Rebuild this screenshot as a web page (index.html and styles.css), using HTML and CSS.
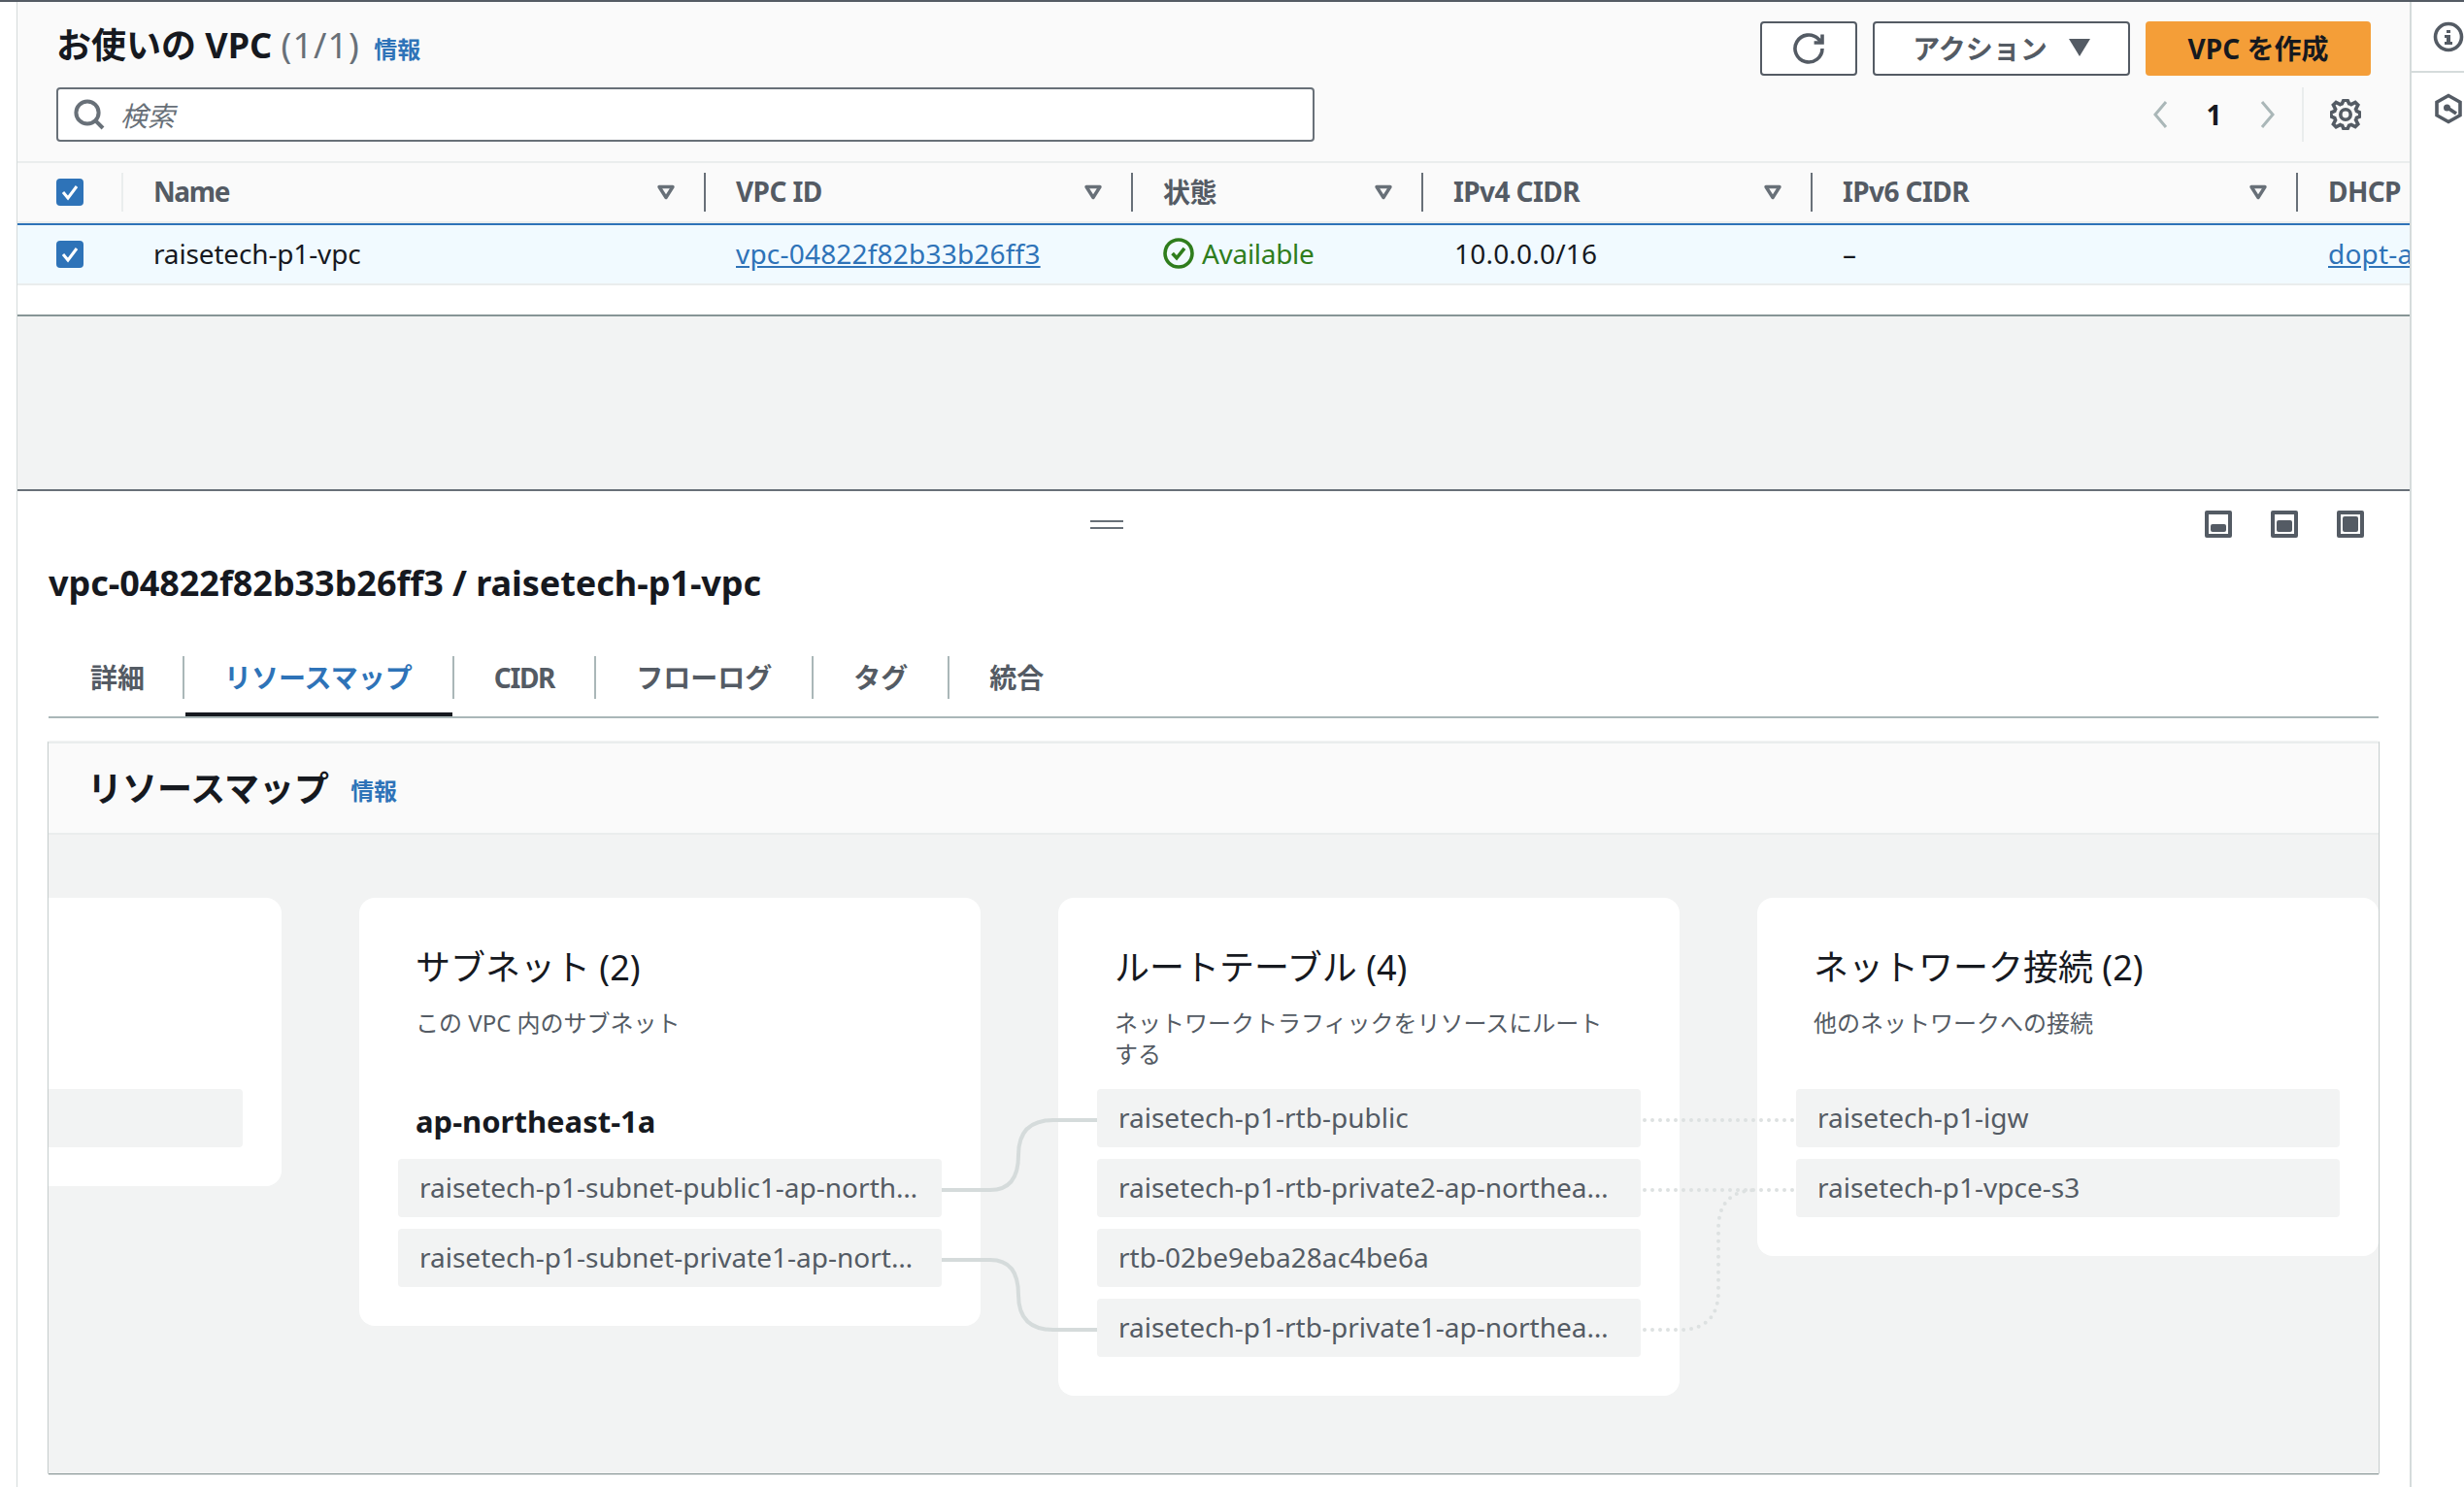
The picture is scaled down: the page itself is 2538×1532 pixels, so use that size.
FILE: index.html
```html
<!DOCTYPE html>
<html lang="ja">
<head>
    <meta charset="UTF-8">
    <title>VPC</title>
    <link rel="stylesheet" href="styles.css">
</head>
<body>
    <div class="page">
        <main class="main">
            <div class="toolbar">
                <div class="title-row">
                    <h2 class="title">お使いの VPC <span class="count">(1/1)</span> <a class="info">情報</a></h2>
                    <div class="actions">
                        <button class="btn btn-icon">
                            <svg class="icon-refresh" viewBox="0 0 16 16"><path d="M15 8a7 7 0 1 1-2.05-4.95L15 5"/><path d="M15 .8V5h-4.2"/></svg>
                        </button>
                        <button class="btn btn-menu"><span>アクション</span>
                            <svg class="icon-caret" viewBox="0 0 22 18"><path d="M0 0h22L11 18z"/></svg>
                        </button>
                        <button class="btn btn-primary"><span>VPC を作成</span></button>
                    </div>
                </div>
                <div class="search-row">
                    <div class="search">
                        <svg class="icon-search" viewBox="0 0 16 16"><circle cx="7" cy="7" r="5.8"/><path d="M11.2 11.2 15 15"/></svg>
                        <span class="placeholder">検索</span>
                    </div>
                    <div class="pager">
                        <svg class="chevron" viewBox="0 0 16 30"><path d="M14 2 3 15l11 13"/></svg>
                        <span class="page-num">1</span>
                        <svg class="chevron" viewBox="0 0 16 30"><path d="m2 2 11 13L2 28"/></svg>
                        <div class="pager-settings">
                            <svg class="icon-gear" viewBox="0 0 16 16"><path d="m13.3 5.2 1.1-2.1L13 1.7l-2.1 1.1c-.3-.2-.7-.3-1.1-.4L9 .6H7l-.8 1.8c-.3.1-.7.2-1 .4L3.1 1.7 1.7 3.1l1.1 2.1c-.2.3-.3.7-.4 1L.6 7v2l1.8.8c.1.4.3.7.4 1.1l-1.1 2.1 1.4 1.4 2.1-1.1c.3.2.7.3 1.1.4L7 15.4h2l.8-1.8c.4-.1.7-.3 1.1-.4l2.1 1.1 1.4-1.4-1.1-2.1c.2-.3.3-.7.4-1.1l1.7-.7V7l-1.7-.8c-.1-.3-.2-.7-.4-1z"/><circle cx="8" cy="8" r="2.6"/></svg>
                        </div>
                    </div>
                </div>
            </div>

            <div class="table">
                <div class="tr thead">
                    <div class="cell cell-check"><span class="checkbox"><svg viewBox="0 0 28 28"><path d="m7 14 5 6 9-12"/></svg></span></div>
                    <div class="cell first-sep">Name<svg class="sort" viewBox="0 0 20 16"><path d="M3 2.5h14L10 13.5z"/></svg></div>
                    <div class="cell">VPC ID<svg class="sort" viewBox="0 0 20 16"><path d="M3 2.5h14L10 13.5z"/></svg></div>
                    <div class="cell">状態<svg class="sort" viewBox="0 0 20 16"><path d="M3 2.5h14L10 13.5z"/></svg></div>
                    <div class="cell">IPv4 CIDR<svg class="sort" viewBox="0 0 20 16"><path d="M3 2.5h14L10 13.5z"/></svg></div>
                    <div class="cell">IPv6 CIDR<svg class="sort" viewBox="0 0 20 16"><path d="M3 2.5h14L10 13.5z"/></svg></div>
                    <div class="cell">DHCP</div>
                </div>
                <div class="tr row-selected">
                    <div class="cell cell-check"><span class="checkbox"><svg viewBox="0 0 28 28"><path d="m7 14 5 6 9-12"/></svg></span></div>
                    <div class="cell name-cell">raisetech-p1-vpc</div>
                    <div class="cell"><a class="link">vpc-04822f82b33b26ff3</a></div>
                    <div class="cell status"><svg class="icon-ok" viewBox="0 0 16 16"><circle cx="8" cy="8" r="7"/><path d="m4.8 8 2.2 2.4 4-5"/></svg>Available</div>
                    <div class="cell num-cell">10.0.0.0/16</div>
                    <div class="cell">–</div>
                    <div class="cell"><a class="link">dopt-a</a></div>
                </div>
            </div>
            <div class="table-foot"></div>
            <div class="split-gap"></div>

            <section class="pane">
                <div class="pane-tools">
                    <div class="handle"></div>
                    <div class="pane-icons">
                        <span class="size-icon"><i class="fill-s"></i></span>
                        <span class="size-icon"><i class="fill-m"></i></span>
                        <span class="size-icon"><i class="fill-l"></i></span>
                    </div>
                </div>
                <h2 class="pane-title">vpc-04822f82b33b26ff3 / raisetech-p1-vpc</h2>
                <div class="tabs">
                    <div class="tab"><span class="tab-label">詳細</span></div>
                    <div class="tab active"><span class="tab-label">リソースマップ</span></div>
                    <div class="tab tab-latin"><span class="tab-label">CIDR</span></div>
                    <div class="tab"><span class="tab-label">フローログ</span></div>
                    <div class="tab"><span class="tab-label">タグ</span></div>
                    <div class="tab"><span class="tab-label">統合</span></div>
                </div>

                <div class="map">
                    <div class="map-head">
                        <h3>リソースマップ</h3><a class="info">情報</a>
                    </div>
                    <div class="map-body">
                        <div class="res-card res-cut">
                            <div class="res-head"></div>
                            <div class="res-item"></div>
                        </div>
                        <div class="res-card">
                            <div class="res-head">
                                <h4>サブネット (2)</h4>
                                <p>この VPC 内のサブネット</p>
                            </div>
                            <div class="az">ap-northeast-1a</div>
                            <div class="res-item">raisetech-p1-subnet-public1-ap-northeast-1a</div>
                            <div class="res-item">raisetech-p1-subnet-private1-ap-northeast-1a</div>
                        </div>
                        <div class="res-card">
                            <div class="res-head">
                                <h4>ルートテーブル (4)</h4>
                                <p>ネットワークトラフィックをリソースにルートする</p>
                            </div>
                            <div class="res-item">raisetech-p1-rtb-public</div>
                            <div class="res-item">raisetech-p1-rtb-private2-ap-northeast-1a</div>
                            <div class="res-item">rtb-02be9eba28ac4be6a</div>
                            <div class="res-item">raisetech-p1-rtb-private1-ap-northeast-1a</div>
                        </div>
                        <div class="res-card">
                            <div class="res-head">
                                <h4>ネットワーク接続 (2)</h4>
                                <p>他のネットワークへの接続</p>
                            </div>
                            <div class="res-item">raisetech-p1-igw</div>
                            <div class="res-item">raisetech-p1-vpce-s3</div>
                        </div>
                        <!-- lines between the items, coordinates relative to map-body -->
                        <svg class="links" viewBox="0 0 2400 658">
                            <path class="solid" d="M920 366H970Q999 366 999 330Q999 294 1035 294H1080"/>
                            <path class="solid" d="M920 438H970Q999 438 999 474Q999 510 1035 510H1080"/>
                            <path class="dotted" d="M1644 294H1798"/>
                            <path class="dotted" d="M1644 366H1798"/>
                            <path class="dotted" d="M1644 510H1680Q1720 510 1720 470V406Q1720 366 1760 366"/>
                        </svg>
                    </div>
                </div>
            </section>
        </main>
        <aside class="side">
            <div class="side-top">
                <svg class="side-icon" viewBox="0 0 32 32"><circle cx="16" cy="16" r="13.5"/><path class="solid-i" d="M14 9h4v3h-4zM12 14h6v7h2v3h-8v-3h2v-4h-2z"/></svg>
            </div>
            <div class="side-next">
                <svg class="side-icon" viewBox="0 0 32 32"><path d="M16 2.5 28 9.2v13.6l-12 6.7-12-6.7V9.2z"/><circle class="solid-i" cx="14.5" cy="15" r="3.5"/><path d="m15 15 9 6"/></svg>
            </div>
        </aside>
    </div>
</body>
</html>
```
FILE: styles.css
```css
* {
    box-sizing: border-box;
}
html, body {
    margin: 0;
    height: 100%;
}
body {
    font-family: "Noto Sans", "Noto Sans CJK JP", sans-serif;
    font-size: 28px;
    color: #16191f;
    background: #fff;
    overflow: hidden;
}
h2, h3, h4, p {
    margin: 0;
}
svg {
    display: block;
    fill: none;
}
.page {
    display: flex;
    height: 1532px;
    border-top: 2px solid #545b64;
}
.main {
    width: 2465px;
    margin-left: 17px;
    border-left: 1px solid #d5dbdb;
    overflow: hidden;
}
.side {
    flex: 1;
    border-left: 2px solid #d5dbdb;
}
.side-top {
    height: 73px;
    padding: 20px 0 0 22px;
    border-bottom: 2px solid #d5dbdb;
}
.side-next {
    padding: 21px 0 0 22px;
}
.side-icon {
    width: 32px;
    height: 32px;
    stroke: #545b64;
    stroke-width: 3.6;
}
.solid-i {
    fill: #545b64;
    stroke: none;
}

/* top of the page */
.toolbar {
    height: 164px;
    padding: 20px 40px 0;
    background: #fafafa;
}
.title-row {
    display: flex;
    justify-content: space-between;
    height: 56px;
    margin-bottom: 12px;
}
.title {
    font-size: 36px;
    font-weight: 700;
    line-height: 50px;
}
.count {
    font-weight: 400;
    color: #687078;
    letter-spacing: 1px;
}
.info {
    margin-left: 5px;
    font-size: 24px;
    font-weight: 700;
    color: #2e73b8;
}
.actions {
    display: flex;
    gap: 16px;
}
.btn {
    height: 56px;
    border: 2px solid #545b64;
    border-radius: 4px;
    background: #fff;
    font-family: inherit;
    font-size: 28px;
    font-weight: 700;
    color: #545b64;
    display: flex;
    align-items: center;
    justify-content: center;
}
.btn span {
    margin-top: -3px;
}
.btn-icon {
    width: 100px;
}
.icon-refresh {
    width: 32px;
    height: 32px;
    stroke: #545b64;
    stroke-width: 1.8;
}
.btn-menu {
    width: 265px;
    gap: 22px;
}
.icon-caret {
    width: 22px;
    height: 18px;
    margin-top: -3px;
    fill: #545b64;
}
.btn-primary {
    width: 232px;
    border: none;
    background: #f49e38;
    color: #16191f;
}
.search-row {
    display: flex;
    align-items: center;
    height: 56px;
}
.search {
    width: 1296px;
    height: 56px;
    display: flex;
    align-items: center;
    gap: 16px;
    padding-left: 16px;
    background: #fff;
    border: 2px solid #687078;
    border-radius: 4px;
}
.icon-search {
    width: 32px;
    height: 32px;
    stroke: #687078;
    stroke-width: 2;
}
.placeholder {
    font-style: italic;
    color: #687078;
}
.pager {
    margin-left: auto;
    display: flex;
    align-items: center;
}
.chevron {
    width: 16px;
    height: 34px;
    stroke: #aab7b8;
    stroke-width: 3;
}
.page-num {
    width: 95px;
    text-align: center;
    font-weight: 700;
}
.pager-settings {
    height: 56px;
    margin-left: 27px;
    padding: 12px 10px 0 27px;
    border-left: 2px solid #eaeded;
}
.icon-gear {
    width: 32px;
    height: 32px;
    stroke: #545b64;
    stroke-width: 1.8;
}

/* vpc table */
.tr {
    display: grid;
    grid-template-columns: 107px 600px 440px 299px 401px 500px 117px;
    align-items: center;
}
.thead {
    height: 64px;
    background: #fafafa;
    border-top: 2px solid #eaeded;
    border-bottom: 2px solid #eaeded;
    font-weight: 700;
    color: #545b64;
    letter-spacing: -0.6px;
}
.thead .cell {
    height: 40px;
    border-left: 2px solid #687078;
    padding: 0 0 2px 31px;
    display: flex;
    align-items: center;
    position: relative;
}
.thead .cell-check {
    border-left: none;
    padding: 0 0 0 40px;
}
.thead .first-sep {
    border-left-color: #eaeded;
    letter-spacing: -1.4px;
}
.sort {
    position: absolute;
    right: 29px;
    top: 12px;
    width: 20px;
    height: 16px;
    stroke: #687078;
    stroke-width: 3.4;
    stroke-linejoin: round;
}
.row-selected {
    height: 64px;
    background: #f1faff;
    border-top: 2px solid #2e73b8;
    border-bottom: 2px solid #eaeded;
    border-left: 1px solid #2e73b8;
    margin-left: -1px;
}
.row-selected .cell {
    padding: 0 0 3px 33px;
    white-space: nowrap;
}
.row-selected .cell-check {
    padding: 0 0 0 40px;
}
.name-cell {
    letter-spacing: -0.15px;
}
.num-cell {
    letter-spacing: 0.2px;
    margin-left: 1px;
}
.checkbox {
    display: block;
    width: 28px;
    height: 28px;
    border-radius: 4px;
    background: #2e73b8;
}
.checkbox svg {
    stroke: #fff;
    stroke-width: 3;
}
.link {
    color: #2e73b8;
    text-decoration: underline;
    letter-spacing: 0.2px;
}
.status {
    display: flex;
    align-items: center;
    gap: 8px;
    color: #2f7d1c;
    letter-spacing: -0.3px;
}
.icon-ok {
    width: 32px;
    height: 32px;
    stroke: #2f7d1c;
    stroke-width: 1.8;
}
.table-foot {
    height: 32px;
    background: #fff;
    border-bottom: 2px solid #879596;
}
.split-gap {
    height: 180px;
    background: #f2f3f3;
    border-bottom: 2px solid #687078;
}

/* split panel */
.pane {
    padding: 20px 32px 0;
}
.pane-tools {
    display: flex;
    align-items: center;
    height: 28px;
    padding-right: 15px;
}
.handle {
    width: 34px;
    height: 9px;
    margin-left: 1073px;
    border-top: 2px solid #687078;
    border-bottom: 2px solid #687078;
}
.pane-icons {
    margin-left: auto;
    display: flex;
    gap: 40px;
}
.size-icon {
    width: 28px;
    height: 28px;
    border: 4px solid #545b64;
    border-radius: 2px;
    padding: 2px;
    display: flex;
    align-items: flex-end;
}
.size-icon i {
    display: block;
    width: 100%;
    background: #545b64;
    border-radius: 2px;
}
.fill-s { height: 8px; }
.fill-m { height: 12px; }
.fill-l { height: 16px; }
.pane-title {
    margin-top: 22px;
    font-size: 36px;
    font-weight: 700;
    line-height: 50px;
    letter-spacing: -0.05px;
}
.tabs {
    display: flex;
    margin-top: 50px;
    height: 64px;
    border-bottom: 2px solid #aab7b8;
}
.tab {
    position: relative;
    height: 44px;
    padding: 0 41px;
    border-left: 2px solid #aab7b8;
    font-weight: 700;
    color: #545b64;
    line-height: 44px;
    white-space: nowrap;
}
.tab:first-child {
    border-left: none;
    padding: 0 39px 0 43px;
}
.tab-latin {
    letter-spacing: -1.35px;
}
.tab.active {
    color: #2e73b8;
}
.tab.active::after {
    content: "";
    position: absolute;
    left: 1px;
    right: 0;
    top: 58px;
    height: 4px;
    background: #16191f;
}

/* resource map */
.map {
    margin-top: 24px;
    border-top: 2px solid #eaeded;
    box-shadow: 0 1px 1px #879596, 1px 0 1px #d5dbdb, -1px 0 1px #d5dbdb;
}
.map-head {
    height: 94px;
    display: flex;
    align-items: center;
    gap: 22px;
    padding: 0 0 4px 40px;
    background: #fafafa;
    border-bottom: 2px solid #eaeded;
}
.map-head h3 {
    font-size: 36px;
    font-weight: 700;
}
.map-head .info {
    margin: 6px 0 0;
}
.map-body {
    position: relative;
    height: 658px;
    padding-top: 65px;
    display: flex;
    align-items: flex-start;
    gap: 80px;
    background: #f2f3f3;
    overflow: hidden;
}
.res-card {
    flex: none;
    width: 640px;
    padding: 0 40px 40px;
    background: #fff;
    border-radius: 16px;
}
.res-cut {
    margin-left: -400px;
}
.res-head {
    height: 197px;
    padding: 46px 20px 0 18px;
}
.res-head h4 {
    font-size: 36px;
    font-weight: 400;
    line-height: 52px;
}
.res-head p {
    margin-top: 15px;
    font-size: 24px;
    line-height: 32px;
    color: #545b64;
}
.az {
    height: 72px;
    padding: 13px 0 0 18px;
    font-size: 31px;
    font-weight: 700;
    line-height: 40px;
}
.res-item {
    height: 60px;
    line-height: 59px;
    margin-bottom: 12px;
    padding: 0 22px;
    background: #f2f3f3;
    border-radius: 4px;
    color: #545b64;
    white-space: nowrap;
    overflow: hidden;
    text-overflow: ellipsis;
}
.res-item:last-child {
    margin-bottom: 0;
}
.links {
    position: absolute;
    left: 0;
    top: 0;
    width: 2400px;
    height: 658px;
}
.solid {
    stroke: #d5dbdb;
    stroke-width: 4;
}
.dotted {
    stroke: #dde1e1;
    stroke-width: 4;
    stroke-linecap: round;
    stroke-dasharray: 0 8;
}
```
